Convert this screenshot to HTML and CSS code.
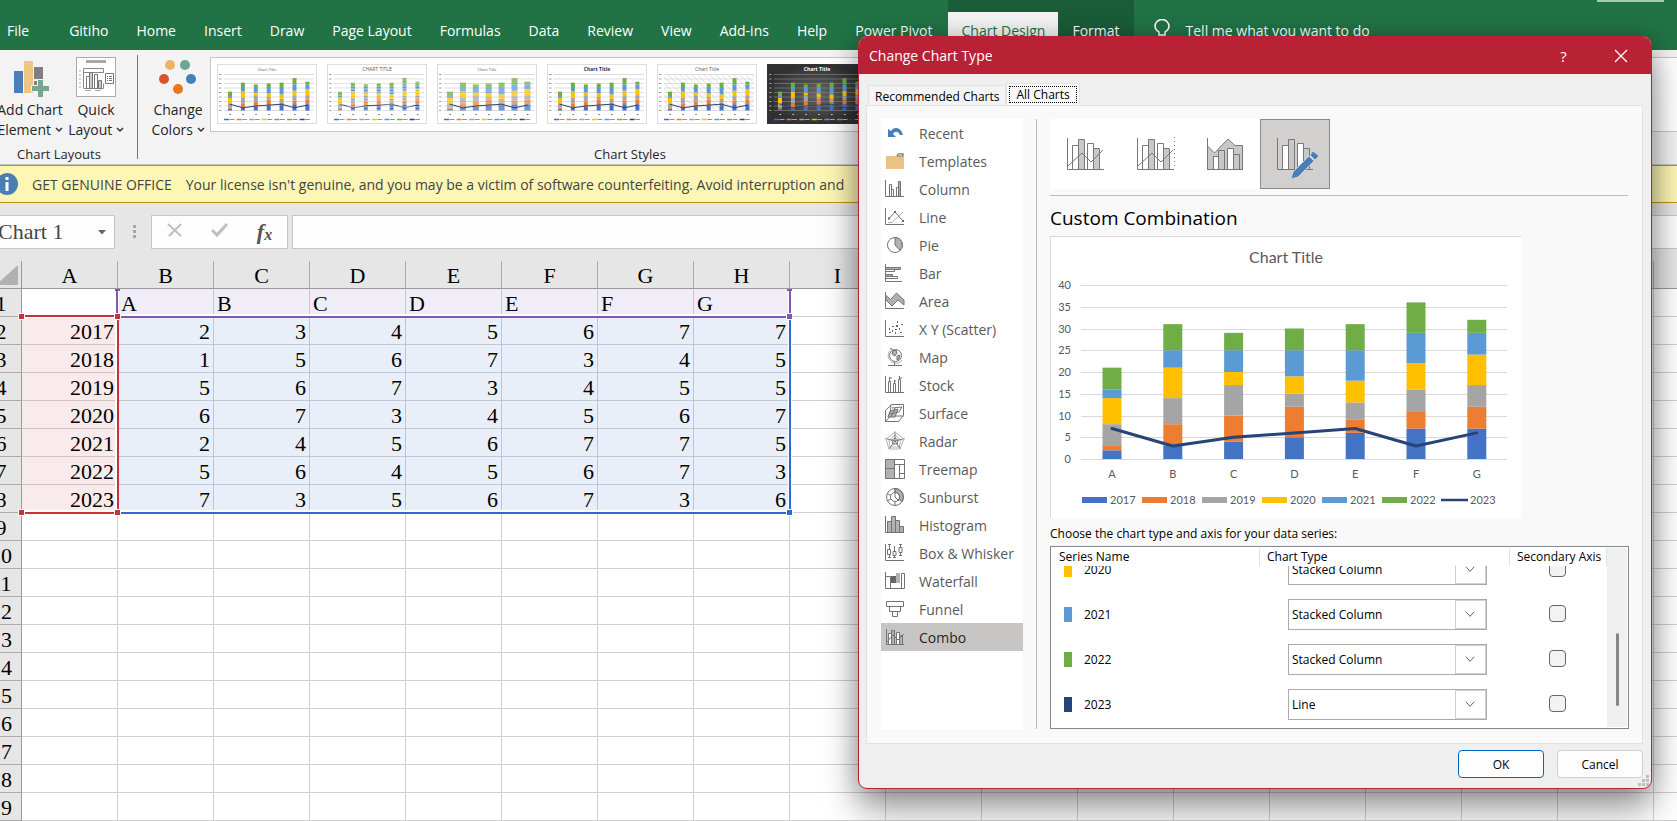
FILE: index.html
```html
<!DOCTYPE html>
<html lang="en">
<head>
<meta charset="utf-8">
<title>Change Chart Type</title>
<link rel="stylesheet" href="styles.css">
</head>
<body>
<div class="app">
  <header class="menubar">
    <nav class="menu">
      <button class="menu-item file">File</button>
      <button class="menu-item">Gitiho</button>
      <button class="menu-item">Home</button>
      <button class="menu-item">Insert</button>
      <button class="menu-item">Draw</button>
      <button class="menu-item">Page Layout</button>
      <button class="menu-item">Formulas</button>
      <button class="menu-item">Data</button>
      <button class="menu-item">Review</button>
      <button class="menu-item">View</button>
      <button class="menu-item">Add-ins</button>
      <button class="menu-item">Help</button>
      <button class="menu-item">Power Pivot</button>
      <div class="context-tabs">
        <button class="menu-item active">Chart Design</button>
        <button class="menu-item">Format</button>
      </div>
      <button class="menu-item tell">
        <svg width="16" height="22" viewBox="0 0 16 22" fill="none" stroke="#fff" stroke-width="1.5"><path d="M5 16v-3C2 11 1 9.500 1 7.500a7 7 0 0 1 14 0c0 2-1 3.500-4 5.500v3zM5.500 19h5"/></svg>
        Tell me what you want to do
      </button>
    </nav>
    <span class="signin"></span>
  </header>

  <section class="ribbon">
    <div class="group layouts">
      <div class="group-tools">
        <button class="tool">
          <svg width="40" height="40" viewBox="0 0 40 40"><path fill="#4a7ebb" d="M4 14h9v22H4z"/><path fill="#eec681" d="M14 4h9v32h-9z"/><path fill="#7f7f7f" d="M24 10h9v12h-9z"/><path fill="#7f7f7f" d="M24 24h3v6h-3z"/><path fill="#73a993" stroke="#f3f3f3" d="M27.500 22.500h6v6h6v6h-6v6h-6v-6h-6v-6h6z"/></svg>
          <span>Add Chart<br>Element <svg class="chev" width="8" height="6" viewBox="0 0 8 6"><path d="M1 1l3 3 3-3"/></svg></span>
        </button>
        <button class="tool">
          <svg width="40" height="40" viewBox="0 0 40 40" fill="none" stroke="#777"><path fill="#fff" stroke="#aaa" d="M.5.5h39v39H.500z"/><path fill="#aaa" stroke="none" d="M10 3h20v3H10z"/><path stroke="#aaa" d="M3 14h2M3 18h2M3 22h2M3 26h2M3 30h2M9 33.500h6M19 33.500h6"/><path stroke="#888" d="M7.500 31V11.500h20V16M7.500 15.500h20M7.500 31.500h20v-5"/><path fill="#fff" d="M10.500 19.500h3v12h-3zM18.500 17.500h3v14h-3z"/><path fill="#ccc" d="M13.500 15.500h3v16h-3zM22.500 23.500h3v8h-3z"/><path fill="#fff" d="M29.500 16.500h8v10h-8z"/><path d="M31 19.500h1M33 19.500h3M31 21.500h1M33 21.500h3M31 23.500h1M33 23.500h3"/></svg>
          <span>Quick<br>Layout <svg class="chev" width="8" height="6" viewBox="0 0 8 6"><path d="M1 1l3 3 3-3"/></svg></span>
        </button>
      </div>
      <div class="group-name">Chart Layouts</div>
    </div>
    <div class="group styles">
      <div class="group-tools">
        <button class="tool">
          <svg width="40" height="40" viewBox="0 0 40 40"><circle cx="12" cy="8" r="5" fill="#eab566"/><circle cx="27" cy="8" r="5" fill="#6aa693"/><circle cx="6" cy="22" r="5" fill="#d9532f"/><circle cx="33" cy="22" r="5" fill="#447fbd"/><circle cx="20" cy="32" r="5" fill="#e8761b"/></svg>
          <span>Change<br>Colors <svg class="chev" width="8" height="6" viewBox="0 0 8 6"><path d="M1 1l3 3 3-3"/></svg></span>
        </button>
        <div class="gallery" id="gallery"></div>
      </div>
      <div class="group-name">Chart Styles</div>
    </div>
  </section>

  <div class="notice">
    <svg width="22" height="22" viewBox="0 0 22 22"><circle cx="11" cy="11" r="11" fill="#4a7db3"/><path fill="#fff" d="M9.500 4h3v3h-3zM9.500 9h3v9h-3z"/></svg>
    <strong>GET GENUINE OFFICE</strong>
    <span>Your license isn't genuine, and you may be a victim of software counterfeiting. Avoid interruption and</span>
  </div>

  <div class="formula-row">
    <div class="name-box">
      <input type="text" value="Chart 1" aria-label="Name box">
      <svg width="8" height="5" viewBox="0 0 8 5"><path fill="#666" d="M0 0h8L4 4.500z"/></svg>
    </div>
    <svg class="dots" width="3" height="14" viewBox="0 0 3 14"><path fill="#a6a6a6" d="M0 0h3v3H0zM0 5h3v3H0zM0 10h3v3H0z"/></svg>
    <div class="fx-tools">
      <button aria-label="Cancel entry"><svg width="16" height="16" viewBox="0 0 16 16"><path fill="none" stroke="#bfbfbf" stroke-width="2" d="M1 2l13 12M14 2L2 14"/></svg></button>
      <button aria-label="Enter"><svg width="18" height="16" viewBox="0 0 18 16"><path fill="none" stroke="#bfbfbf" stroke-width="3" d="M1 8l5 5L16 2"/></svg></button>
      <button class="fx" aria-label="Insert function">f<sub>x</sub></button>
    </div>
    <input class="formula" type="text" aria-label="Formula bar">
  </div>

  <main class="sheet">
    <table class="cells" id="cells"></table>
    <svg class="ranges" width="820" height="260" viewBox="0 0 820 260" fill="none">
      <g stroke="#fff" stroke-width="4"><path d="M41 55h95v196M136 251H809V55H136V28M809 28v27M41 251h95"/></g>
      <g stroke-width="2">
        <path stroke="#2f6bc9" d="M137 252H809V56"/>
        <path stroke="#8158b8" d="M140 56H806M136 30V54M809 30V54M134 29h5M806 29h5"/>
        <path stroke="#c6323e" d="M41 55h94M137 55v193M41 252h94"/>
      </g>
      <g stroke="#fff"><path fill="#c6323e" d="M133.500 52.500h6v6h-6zM133.500 248.500h6v6h-6zM37.500 52.500h6v6h-6zM37.500 248.500h6v6h-6z"/><path fill="#8158b8" d="M805.500 52.500h6v6h-6z"/><path fill="#2f6bc9" d="M805.500 248.500h6v6h-6z"/></g>
    </svg>
  </main>
</div>

<div class="dialog" role="dialog" aria-labelledby="dlg-title">
  <div class="titlebar">
    <h1 id="dlg-title">Change Chart Type</h1>
    <button aria-label="Help">?</button>
    <button aria-label="Close"><svg width="14" height="14" viewBox="0 0 14 14"><path fill="none" stroke="#fff" stroke-width="1.300" d="M1 1l12 12M13 1L1 13"/></svg></button>
  </div>
  <div class="dialog-body">
    <div class="tabs">
      <button class="tab">Recommended Charts</button>
      <button class="tab current"><span>All Charts</span></button>
    </div>
    <div class="panel">
      <div class="types">
        <button><svg viewBox="0 0 20 20"><path fill="#4a7ebb" d="M3 6v8h8l-3-3c2-3 5-3 7 1h3C16 4 9 3 6 8z"/></svg>Recent</button>
        <button><svg viewBox="0 0 20 20"><path fill="#eac282" d="M1 5h10l2-3h6v16H1z"/><path fill="#fff" d="M13 3h5v2h-6z"/></svg>Templates</button>
        <button><svg viewBox="0 0 20 20"><path d="M.5 1v16.500H19"/><path d="M4.500 17V5.500h2V17M6.500 17v-6.500h2V17M11.500 17V8.500h2V17"/><path class="g" d="M13.500 17V2.500h2V17z"/></svg>Column</button>
        <button><svg viewBox="0 0 20 20"><path d="M.5 1v16.500H19"/><path class="l" d="M3 15.500h4L18 5"/><path d="M4 11.500L10 5l8 9"/><path class="d" d="M3 10.500h2v2H3zM9 4h2v2H9zM17 13h2v2h-2z"/></svg>Line</button>
        <button><svg viewBox="0 0 20 20"><circle cx="10" cy="10" r="7.500"/><path class="g" d="M10 2.500a7.500 7.500 0 0 1 5 13L10 10z"/></svg>Pie</button>
        <button><svg viewBox="0 0 20 20"><path d="M.5 1v17.500H17"/><path class="g" d="M.5 4.500h15v2H.5zM.5 11.500h7v2h-7z"/><path d="M.5 6.500h9v2h-9M.5 13.500h12v2H.5"/></svg>Bar</button>
        <button><svg viewBox="0 0 20 20"><path class="g" d="M.5 4l5 4.500L11.500 2 19 9v5l-6-5-6 6-6-6z"/><path d="M.5 1v16.500H19"/></svg>Area</button>
        <button><svg viewBox="0 0 20 20"><path d="M.5 1v16.500H19"/><path class="d" d="M4 9h1v2H4zM7 7h2v1H7zM12 2h1v2h-1zM16 5h2v1h-2zM11 6h2v2h-2zM7 11h1v2H7zM4 13h2v1H4zM10 10h2v1h-2zM14 9h1v2h-1zM15 13h2v1h-2zM10 13h1v2h-1z"/></svg>X Y (Scatter)</button>
        <button><svg viewBox="0 0 20 20"><circle cx="10.500" cy="8.500" r="6"/><path class="g" d="M8 4l3-1 1 3-2 3-3-2zM12 9l3-1-1 4-2 1z"/><path class="l" d="M6 2.500C1 7 3 14 9 16c4 1 7-1 8-3"/><path d="M9.500 15v3M3 18.500h14M5 1l3 2"/></svg>Map</button>
        <button><svg viewBox="0 0 20 20"><path d="M.5 1v16.500H19"/><path d="M4.500 2v4M9.500 5v3M14.500 1v4M3.500 17V6.500h2V17M8.500 17V8.500h2V17M13.500 17V4.500h2V17M4 3h3M9 6h2M14 3h3"/></svg>Stock</button>
        <button><svg viewBox="0 0 20 20"><path d="M.5 18.500v-11L6.500 1.500h12v11l-5 6zM.5 18.500l5-5.500 13 0M6 1.500l-1 11"/><path class="g" d="M5 8l8-2-3 8H3z"/><path d="M7 5l10-1-3 5-10 2M10 5l-4 9"/></svg>Surface</button>
        <button><svg viewBox="0 0 20 20"><path class="l" d="M10 4l6 5-2 7H5L4 9z"/><path d="M10 .5v9.500l9.500-2.500M10 10l5.500 8M10 10l-6 8M10 10L.5 7.500M10 7l3 2-1 4H8L7 9z"/><path class="l" d="M10 1l9 7-4 10H4L1 8z"/></svg>Radar</button>
        <button><svg viewBox="0 0 20 20"><path d="M.5.500h19v19H.5z"/><path class="g" d="M.5.500h9v9h-9zM.5 9.500h9v10h-9z"/><path d="M9.500 5.500h10M14.500 5.500v14M14.500 14.500h5"/></svg>Treemap</button>
        <button><svg viewBox="0 0 20 20"><path class="g" d="M10 1.500a8.500 8.500 0 0 1 7 13l-3-2A5 5 0 0 0 10 5z"/><circle cx="10" cy="10" r="8.500"/><circle cx="10" cy="10" r="4.500"/><path d="M10 1v9l4 4M2 6.500l4 2M2 14l4-2M10 14.500v4"/></svg>Sunburst</button>
        <button><svg viewBox="0 0 20 20"><path class="g" d="M2.500 6.500h4v11h-4zM6.500 1.500h4v16h-4zM10.500 5.500h4v12h-4zM14.500 11.500h4v6h-4z"/><path d="M.5 1v16.500H19"/></svg>Histogram</button>
        <button><svg viewBox="0 0 20 20"><path d="M.5 1v16.500H19"/><path d="M4.500 1v14M9.500 3v12M15.500 1v12M3 1.500h3M3 14.500h3M8 14.500h3M14 1.500h3M14 12.500h3"/><path fill="#fff" d="M2.500 6.500h3v5h-3zM8 8.500h3v4H8zM14 4.500h3v5h-3z"/></svg>Box &amp; Whisker</button>
        <button><svg viewBox="0 0 20 20"><path d="M.5 1v16.500H19.500V2.500h-3v15M.5 5.500h5v12"/><path class="d" d="M6 5h5v7H6z"/><path class="g" stroke="none" d="M11 2h4v10h-4z"/></svg>Waterfall</button>
        <button><svg viewBox="0 0 20 20"><path d="M1.500 2.500h17v5h-17zM4.500 7.500h11v5h-11zM7.500 12.500h5v5h-5z"/></svg>Funnel</button>
        <button class="selected"><svg viewBox="0 0 20 20"><path fill="#fff" d="M3.500 6.500h3v11h-3zM11.500 5.500h3v12h-3z"/><path class="g" d="M6.500 3.500h3v14h-3zM14.500 8.500h3v9h-3z"/><path d="M1.500 2v15.500H19M2 15l6-7 5 5 6-6"/></svg>Combo</button>
      </div>
      <div class="detail">
        <div class="subtypes">
          <button aria-label="Clustered column and line"><svg viewBox="0 0 38 34"><path class="w" d="M6.500 8.500h6v24h-6zM21.500 6.500h6v26h-6z"/><path class="s" d="M12.500 2.500h6v30h-6zM27.500 11.500h6v21h-6z"/><path d="M1.500 1v31.500H38M2 29l14-13 9 9 12-12"/></svg></button>
          <button aria-label="Clustered column and line on secondary axis"><svg viewBox="0 0 38 34"><path class="w" d="M6.500 8.500h6v24h-6zM21.500 6.500h6v26h-6z"/><path class="s" d="M12.500 2.500h6v30h-6zM27.500 11.500h6v21h-6z"/><path d="M1.500 1v31.500H38M2 29l14-13 9 9 12-12"/><path stroke-dasharray="1 3" d="M38.500 0v32"/></svg></button>
          <button aria-label="Stacked area and column"><svg viewBox="0 0 38 34"><path class="s" d="M1.500 9l7 7L22 2l7 6.500h7.500v24h-35z"/><path class="w" d="M7.500 19.500h5v13h-5zM21.500 11.500h6v21h-6z"/><path class="s" d="M12.500 13.500h6v19h-6zM27.500 17.500h6v15h-6z"/><path d="M1.500 1v31.500H37"/></svg></button>
          <button class="selected" aria-label="Custom combination"><svg viewBox="0 0 38 34"><path class="w" d="M6.500 8.500h6v24h-6zM21.500 6.500h6v26h-6z"/><path class="s" d="M12.500 2.500h6v30h-6zM27.500 11.500h6v21h-6z"/><path d="M1.500 1v31.500H37"/><path fill="#4a7ebb" stroke="#d2d0ce" d="M15 42l2-7 16-16 5 5-16 16zM34 18l3-4 6 5-4 4z"/></svg></button>
        </div>
        <h2>Custom Combination</h2>
        <div class="preview" id="preview"></div>
        <p class="hint">Choose the chart type and axis for your data series:</p>
        <div class="series-box">
          <div class="series-scroll" id="series-scroll">
            <table class="series">
              <thead><tr><th>Series Name</th><th>Chart Type</th><th>Secondary Axis</th></tr></thead>
              <tbody id="series"></tbody>
            </table>
          </div>
          <div class="scrollbar"><i></i></div>
        </div>
      </div>
    </div>
    <div class="actions">
      <button class="primary">OK</button>
      <button>Cancel</button>
    </div>
    <svg class="grip" width="11" height="11" viewBox="0 0 11 11"><path fill="#bdbdbd" d="M8 0h3v3H8zM8 4h3v3H8zM4 4h3v3H4zM8 8h3v3H8zM4 8h3v3H4zM0 8h3v3H0z"/></svg>
  </div>
</div>
<script src="script.js"></script>
</body>
</html>
```

FILE: styles.css
```css
* { box-sizing: border-box; }
body { margin: 0; height: 100vh; overflow: hidden; position: relative; background: #fff; font-family: "Open Sans", "Noto Sans", sans-serif; font-size: 14px; color: #262626; }
button { font: inherit; color: inherit; border: 0; padding: 0; background: none; white-space: nowrap; }
h1, h2, p { margin: 0; font-weight: 400; }

/* the application window runs past the left edge of the screen */
.app { margin-left: -19px; height: 100vh; display: flex; flex-direction: column; overflow: hidden; }
.app > * { flex: none; }

.menubar { display: flex; justify-content: space-between; background: #217346; height: 50px; padding: 0 13px 0 12px; }
.menu { display: flex; color: #fff; }
.menu-item { padding: 10px 14px 0; height: 50px; display: flex; align-items: center; }
.menu-item.file { padding-right: 26px; }
.context-tabs { display: flex; background: #1b5c38; align-items: flex-end; margin-left: 2px; }
.context-tabs .active { height: 38px; padding: 0 13px 2px; background: #f3f3f3; color: #217346; }
.tell { gap: 16px; padding-left: 20px; }
.signin { width: 67px; height: 2px; background: #9fcdb3; }

.ribbon { display: flex; height: 115px; background: #f3f3f3; border-bottom: 1px solid #c6c6c6; }
.group { display: flex; flex-direction: column; justify-content: space-between; margin: 5px 0; }
.layouts { width: 139px; flex: none; margin-left: 18px; border-right: 1px solid #777; }
.styles { flex: 1; }
.group-tools { display: flex; }
.tool { display: flex; flex-direction: column; align-items: center; gap: 3px; line-height: 20px; padding-top: 2px; }
.layouts .tool { width: 62px; }
.layouts .tool + .tool { width: 70px; }
.styles .tool { width: 72px; padding-left: 8px; }
.chev { fill: none; stroke: #333; stroke-width: 1.5; vertical-align: 2px; }
.group-name { font-size: 13px; line-height: 10px; text-align: center; }
.styles .group-name { width: 984px; }
.layouts .group-name { width: 120px; }
.gallery { flex: 1; display: flex; gap: 10px; height: 75px; margin-top: 2px; padding: 6px; background: #fff; border: 1px solid #c6c6c6; border-right: 0; overflow: hidden; }
.gallery svg { flex: none; width: 100px; height: 60px; }

.notice { display: flex; align-items: center; height: 38px; padding-left: 15px; background: #fdf6b4; border: solid #b8960c; border-width: 1px 0; color: #444; white-space: nowrap; }
.notice strong { font-weight: 500; margin: 0 14px; }

.formula-row { display: flex; align-items: center; gap: 4px; height: 58px; background: #e6e6e6; }
.name-box, .fx-tools, .formula { height: 34px; background: #fdfdfd; border: 1px solid #c6c6c6; }
.name-box { width: 134px; display: flex; align-items: center; padding-right: 8px; }
.name-box input { flex: 1; min-width: 0; border: 0; background: none; padding: 0 0 0 16px; font: 22px "Liberation Serif", serif; color: #444; }
.dots { margin: 0 11px 0 14px; }
.fx-tools { display: flex; width: 137px; }
.fx-tools button { flex: 1; }
.fx { font: italic bold 22px "Liberation Serif", serif; color: #555; }
.fx sub { font-size: 16px; vertical-align: -1px; }
.formula { flex: 1; border-right: 0; }

.sheet { position: relative; }
.cells { border-collapse: separate; border-spacing: 0; table-layout: fixed; width: 1769px; font: 22px/24px "Liberation Serif", serif; color: #000; }
.cells th, .cells td { height: 28px; padding: 3px 3px 0; border: solid #d0d0d0; border-width: 0 1px 1px 0; overflow: hidden; white-space: nowrap; }
.cells th { background: #e6e6e6; font-weight: 400; border-color: #ababab; text-align: center; }
.cells thead th { border-bottom-color: #999; }
.cells th:first-child { width: 41px; border-right-color: #999; }
.corner { position: relative; }
.corner svg { position: absolute; right: 3px; bottom: 3px; }
.cells td.head { background: #f1edf8; border-color: #c9c5d2; }
.cells td.year { background: #f9ebeb; border-color: #cfc2c2; text-align: right; }
.cells td.num { background: #e8eff9; border-color: #bfc6d2; text-align: right; }
.ranges { position: absolute; left: 0; top: 0; }

.dialog { position: absolute; left: 858px; right: 25px; top: 36px; border: 1px solid #b92134; border-radius: 9px; background: #efefef; overflow: hidden; color: #000; font-size: 12px; box-shadow: 0 20px 36px rgba(0,0,0,.4), 0 0 24px rgba(0,0,0,.2); }
.titlebar { display: flex; align-items: center; height: 37px; padding: 0 2px 0 10px; background: #b92134; color: #fff; font-size: 14px; }
.titlebar h1 { flex: 1; font-size: 14px; }
.titlebar button { width: 57px; height: 37px; font-size: 15px; }
.titlebar svg { display: block; margin: auto; }
.dialog-body { position: relative; padding: 9px 8px 10px 7px; }
.tabs { display: flex; align-items: flex-end; padding-left: 2px; }
.tab { height: 20px; padding: 2px 6px 0; line-height: 17px; border: 1px solid #e2e2e2; border-bottom: 0; background: #f4f4f4; }
.tab.current { height: 22px; padding: 2px; background: #f9f9f9; }
.tab.current span { display: block; border: 1px dotted #000; padding: 0 6px; line-height: 15px; }
.panel { display: flex; background: #f9f9f9; border: 1px solid #e2e2e2; padding: 13px 11px 14px 14px; }
.types { width: 142px; flex: none; background: #fff; color: #5a5a5a; font-size: 14px; }
.types button { display: flex; align-items: center; gap: 14px; width: 100%; height: 28px; padding-left: 4px; }
.types .selected { background: #c8c6c4; color: #262626; }
.types svg { width: 20px; height: 20px; fill: none; stroke: #737373; }
.types .g { fill: #b1b1b1; }
.types .l { stroke: #b1b1b1; }
.types .d { fill: #666; stroke: none; }
.types [fill]:not([fill="#fff"]) { stroke: none; }
.detail { flex: 1; min-width: 0; margin-left: 13px; padding-left: 13px; position: relative; border-left: 1px solid #bcbcbc; }
.subtypes { display: flex; width: 280px; background: #fff; position: relative; }
.subtypes button { width: 70px; height: 70px; display: grid; place-items: center; }
.subtypes svg { width: 38px; height: 34px; fill: none; stroke: #777; overflow: visible; }
.subtypes .w { fill: #fff; }
.subtypes .s { fill: #c8c8c8; }
.subtypes .selected { background: #d2d0ce; border: 1px solid #8a8886; }
h2 { margin-top: 6px; margin-right: 3px; padding-top: 8px; border-top: 1px solid #bcbcbc; font-size: 19px; line-height: 28px; }
.preview { width: 471px; margin-top: 4px; background: #fff; border: solid #d9d9d9; border-width: 1px 0 0 1px; }
.preview svg, .gallery svg { display: block; }
.preview svg { width: 100%; }
.hint { line-height: 18px; margin: 7px 0 3px; }
.series-box { display: flex; height: 183px; margin-right: 2px; border: 1px solid #828790; background: #fff; padding: 1px; }
.series-scroll { flex: 1; overflow-y: scroll; scrollbar-width: none; }
.series { width: 100%; border-collapse: separate; border-spacing: 0; table-layout: fixed; }
.series th { position: sticky; top: 0; z-index: 1; height: 18px; padding: 0 0 0 7px; line-height: 18px; background: #fff; border-right: 1px solid #e2e2e2; font-weight: 400; text-align: left; white-space: nowrap; }
.series th:nth-child(1) { width: 208px; }
.series th:nth-child(3) { width: 97px; }
.series td { height: 45px; padding: 0; }
.series td:first-child { padding-left: 12px; }
.series td:nth-child(2) { padding-left: 28px; }
.series td:last-child { text-align: center; padding: 0 2px 2px 0; }
.name { display: flex; align-items: center; gap: 12px; }
.name i { width: 8px; height: 15px; }
.pick { display: block; position: relative; width: 199px; height: 31px; }
.pick select { appearance: none; width: 100%; height: 100%; padding: 0 36px 0 3px; border: 1px solid #ababab; border-radius: 0; background: #fff; font: inherit; color: #000; }
.pick svg { position: absolute; right: 1px; top: 1px; border: 1px solid #d0d0d0; background: #fff; fill: none; stroke: #555; pointer-events: none; }
.series input { appearance: none; display: block; width: 17px; height: 17px; margin: 0 auto; border: 1px solid #666; border-radius: 4px; background: #f3f3f3; }
.scrollbar { width: 20px; background: #f0f0f0; display: flex; }
.scrollbar i { width: 3px; height: 73px; margin: 85px auto 0; border-radius: 2px; background: #868686; }
.actions { display: flex; justify-content: flex-end; gap: 13px; padding-top: 6px; }
.actions button { width: 86px; height: 28px; background: #fdfdfd; border: 1px solid #d0d0d0; border-radius: 4px; }
.actions .primary { border-color: #0067c0; }
.grip { position: absolute; right: 2px; bottom: 2px; }
```

FILE: script.js
```js
const years = [2017, 2018, 2019, 2020, 2021, 2022, 2023];
const colors = ["#4472c4", "#ed7d31", "#a5a5a5", "#ffc000", "#5b9bd5", "#70ad47", "#264478"];
const data = [
  [2, 3, 4, 5, 6, 7, 7],
  [1, 5, 6, 7, 3, 4, 5],
  [5, 6, 7, 3, 4, 5, 5],
  [6, 7, 3, 4, 5, 6, 7],
  [2, 4, 5, 6, 7, 7, 5],
  [5, 6, 4, 5, 6, 7, 3],
  [7, 3, 5, 6, 7, 3, 6]
];
const letters = "ABCDEFGHIJKLMNOPQR".split("");
const cats = letters.slice(0, 7);

/* worksheet */
let sheet = '<thead><tr><th class="corner"><svg width="22" height="20" viewBox="0 0 22 20"><path fill="#b1b1b1" d="M22 0v20H0z"/></svg></th>' +
  letters.map(l => `<th scope="col">${l}</th>`).join("") + "</tr></thead><tbody>";
for (let r = 1; r <= 19; r++) {
  sheet += `<tr><th scope="row">${r}</th>`;
  letters.forEach((_, c) => {
    let cls = "", text = "";
    if (r === 1 && c >= 1 && c <= 7) { cls = "head"; text = cats[c - 1]; }
    else if (r >= 2 && r <= 8 && c === 0) { cls = "year"; text = years[r - 2]; }
    else if (r >= 2 && r <= 8 && c <= 7) { cls = "num"; text = data[r - 2][c - 1]; }
    sheet += `<td class="${cls}">${text}</td>`;
  });
  sheet += "</tr>";
}
document.getElementById("cells").innerHTML = sheet + "</tbody>";

/* stacked columns with the last series as a line */
function plot(x0, pitch, width, base, unit, lineWidth, opacity) {
  let out = "";
  cats.forEach((_, i) => {
    let total = 0;
    for (let s = 0; s < 6; s++) {
      const v = data[s][i];
      total += v;
      out += `<rect x="${x0 + i * pitch - width / 2}" y="${base - total * unit}" width="${width}" height="${v * unit}" fill="${colors[s]}" opacity="${opacity}"/>`;
    }
  });
  const pts = cats.map((_, i) => `${x0 + i * pitch},${base - data[6][i] * unit}`).join(" ");
  return out + `<polyline points="${pts}" fill="none" stroke="#264478" stroke-width="${lineWidth}" stroke-linejoin="round" stroke-linecap="round"/>`;
}

function preview() {
  const base = 222, unit = 4.35;
  let out = '<svg viewBox="0 0 470 281" font-family="Lato, sans-serif" font-size="11" fill="#595959"><text x="235" y="26" font-size="16" text-anchor="middle">Chart Title</text>';
  for (let v = 0; v <= 40; v += 5) {
    const y = Math.round(base - v * unit);
    out += `<path stroke="#d9d9d9" d="M30 ${y + .5}h426"/><text x="20" y="${y + 4}" text-anchor="end">${v}</text>`;
  }
  out += plot(61, 60.8, 19, base, unit, 3, 1);
  cats.forEach((c, i) => out += `<text x="${61 + i * 60.8}" y="241" text-anchor="middle">${c}</text>`);
  years.forEach((y, i) => {
    const x = 31 + i * 60;
    out += i < 6 ? `<rect x="${x}" y="260" width="25" height="6" fill="${colors[i]}"/>`
                 : `<path stroke="${colors[i]}" stroke-width="2.500" d="M${x - 1} 263h27"/>`;
    out += `<text x="${x + 28}" y="267">${y}</text>`;
  });
  return out + "</svg>";
}

function thumb(n) {
  const dark = n === 5;
  const ink = dark ? "#ddd" : "#666";
  let out = `<svg viewBox="0 0 100 60"><defs><radialGradient id="dk"><stop stop-color="#666"/><stop offset="1" stop-color="#303030"/></radialGradient><pattern id="hatch" width="6" height="6" patternUnits="userSpaceOnUse"><path stroke="#ccc" stroke-width=".6" d="M0 0l6 6"/></pattern></defs>`;
  out += `<rect x=".5" y=".5" width="99" height="59" fill="${dark ? "url(#dk)" : "#fff"}" stroke="${dark ? "#333" : "#ddd"}"/>`;
  if (n === 4) out += '<rect x="7" y="10" width="90" height="37" fill="url(#hatch)"/>';
  for (let i = 0; i < 9; i++) {
    const y = 10.5 + i * 4.5;
    out += `<path stroke="${dark ? "#777" : "#d4d4d8"}" stroke-width=".8" d="M7 ${y}h90"/><path stroke="${ink}" opacity=".6" d="M2 ${y}h2.500"/>`;
  }
  out += `<text x="50" y="6.500" font-size="${n === 0 || n === 2 ? 4 : 5}" font-weight="${n === 3 || dark ? 700 : 400}" text-anchor="middle" fill="${dark ? "#fff" : n === 3 ? "#234" : "#555"}">${n === 1 ? "CHART TITLE" : "Chart Title"}</text>`;
  out += plot(13, 12.9, n === 2 ? 6 : 4, 46.5, .9, 1, n === 2 ? .75 : 1);
  if (n === 1) for (let y = 13; y < 47; y += 3) out += `<path stroke="#fff" stroke-width=".8" opacity=".7" d="M8 ${y}h86"/>`;
  cats.forEach((_, i) => {
    out += `<path stroke="${ink}" d="M${12.5 + i * 12.9} 50.500h1.500"/><path stroke="${colors[i]}" stroke-width="1.500" d="M${7 + i * 12.6} 55.500h5"/><path stroke="${ink}" opacity=".7" d="M${12.5 + i * 12.6} 55.500h5"/>`;
  });
  return out + "</svg>";
}

document.getElementById("preview").innerHTML = preview();
document.getElementById("gallery").innerHTML = [0, 1, 2, 3, 4, 5].map(thumb).join("");

/* series list */
document.getElementById("series").innerHTML = years.map((y, i) => `
  <tr>
    <td><span class="name"><i style="background:${colors[i]}"></i>${y}</span></td>
    <td><span class="pick"><select aria-label="Chart type for ${y}">
      <option${i < 6 ? " selected" : ""}>Stacked Column</option><option${i === 6 ? " selected" : ""}>Line</option></select>
      <svg width="31" height="29" viewBox="0 0 31 29"><path d="M10.500 11.500l4.500 5 4.500-5"/></svg></span></td>
    <td><input type="checkbox" aria-label="Secondary axis for ${y}"></td>
  </tr>`).join("");
const scroller = document.getElementById("series-scroll");
scroller.scrollTop = scroller.scrollHeight;
```
